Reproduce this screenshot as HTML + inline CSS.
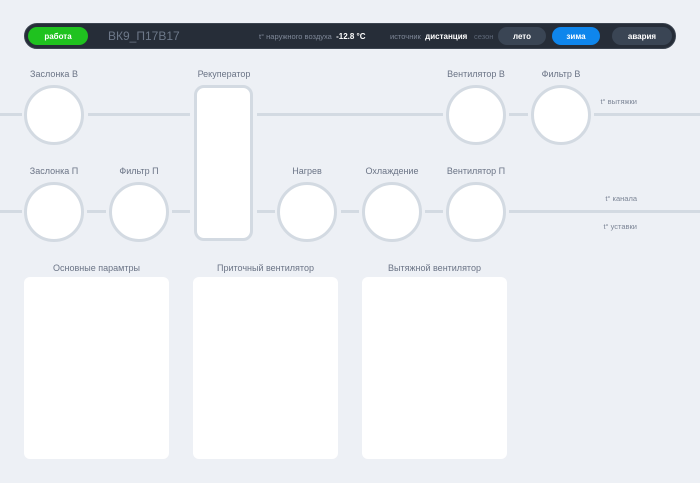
<!DOCTYPE html>
<html><head><meta charset="utf-8"><style>
*{margin:0;padding:0;box-sizing:border-box}
body{width:700px;height:483px;background:#edf0f5;font-family:"Liberation Sans",sans-serif;position:relative;overflow:hidden}
.a{position:absolute}
.hdr{left:24px;top:23px;width:652px;height:26px;background:#262d38;border:1px solid #3c4450;border-radius:13px}
.btn{position:absolute;top:27px;height:18px;border-radius:9px;color:#fff;font-size:8px;font-weight:bold;text-align:center;line-height:19px}
.ln{position:absolute;height:3px;background:#d3dae2}
.c{position:absolute;width:60px;height:60px;border-radius:50%;background:#fff;border:3px solid #d3dae2}
.lb{position:absolute;font-size:9px;color:#6b7486;text-align:center;width:120px}
.sm{position:absolute;font-size:7.5px;color:#7c8596;text-align:right;width:100px}
.p{position:absolute;top:277px;width:145px;height:182px;background:#fff;border-radius:6px}
.pt{position:absolute;top:263px;width:145px;font-size:9px;color:#6b7486;text-align:center}
</style></head><body>
<div class="a hdr"></div>
<div class="btn" style="left:28px;width:60px;background:#1fc21f">работа</div>
<div class="a" style="left:108px;top:29px;font-size:12px;color:#6d7889">ВК9_П17В17</div>
<div class="a" style="left:259px;top:32px;font-size:7.5px;color:#7f8898">t° наружного воздуха <b style="color:#fff;font-size:8px">&nbsp;-12.8 °C</b></div>
<div class="a" style="left:390px;top:32px;font-size:7.5px;color:#7f8898">источник <b style="color:#fff;font-size:8px">&nbsp;дистанция</b></div>
<div class="a" style="left:474px;top:32px;font-size:7.5px;color:#5e6878">сезон</div>
<div class="btn" style="left:498px;width:48px;background:#3a4554">лето</div>
<div class="btn" style="left:552px;width:48px;background:#0f86ec">зима</div>
<div class="btn" style="left:612px;width:60px;background:#3a4554">авария</div>

<div class="ln" style="left:0;width:22px;top:113px"></div>
<div class="ln" style="left:88px;width:102px;top:113px"></div>
<div class="ln" style="left:257px;width:186px;top:113px"></div>
<div class="ln" style="left:509px;width:19px;top:113px"></div>
<div class="ln" style="left:594px;width:106px;top:113px"></div>
<div class="ln" style="left:0;width:22px;top:210px"></div>
<div class="ln" style="left:87px;width:19px;top:210px"></div>
<div class="ln" style="left:172px;width:18px;top:210px"></div>
<div class="ln" style="left:257px;width:18px;top:210px"></div>
<div class="ln" style="left:341px;width:18px;top:210px"></div>
<div class="ln" style="left:425px;width:18px;top:210px"></div>
<div class="ln" style="left:509px;width:191px;top:210px"></div>

<div class="c" style="left:24px;top:85px"></div>
<div class="c" style="left:446px;top:85px"></div>
<div class="c" style="left:531px;top:85px"></div>
<div class="c" style="left:24px;top:182px"></div>
<div class="c" style="left:109px;top:182px"></div>
<div class="c" style="left:277px;top:182px"></div>
<div class="c" style="left:362px;top:182px"></div>
<div class="c" style="left:446px;top:182px"></div>
<div class="a" style="left:194px;top:85px;width:59px;height:156px;background:#fff;border:3px solid #d3dae2;border-radius:10px"></div>

<div class="lb" style="left:-6px;top:69px">Заслонка В</div>
<div class="lb" style="left:164px;top:69px">Рекуператор</div>
<div class="lb" style="left:416px;top:69px">Вентилятор В</div>
<div class="lb" style="left:501px;top:69px">Фильтр В</div>
<div class="lb" style="left:-6px;top:166px">Заслонка П</div>
<div class="lb" style="left:79px;top:166px">Фильтр П</div>
<div class="lb" style="left:247px;top:166px">Нагрев</div>
<div class="lb" style="left:332px;top:166px">Охлаждение</div>
<div class="lb" style="left:416px;top:166px">Вентилятор П</div>
<div class="sm" style="left:537px;top:97px">t° вытяжки</div>
<div class="sm" style="left:537px;top:194px">t° канала</div>
<div class="sm" style="left:537px;top:222px">t° уставки</div>

<div class="pt" style="left:24px">Основные парамтры</div>
<div class="pt" style="left:193px">Приточный вентилятор</div>
<div class="pt" style="left:362px">Вытяжной вентилятор</div>
<div class="p" style="left:24px"></div>
<div class="p" style="left:193px"></div>
<div class="p" style="left:362px"></div>
</body></html>
